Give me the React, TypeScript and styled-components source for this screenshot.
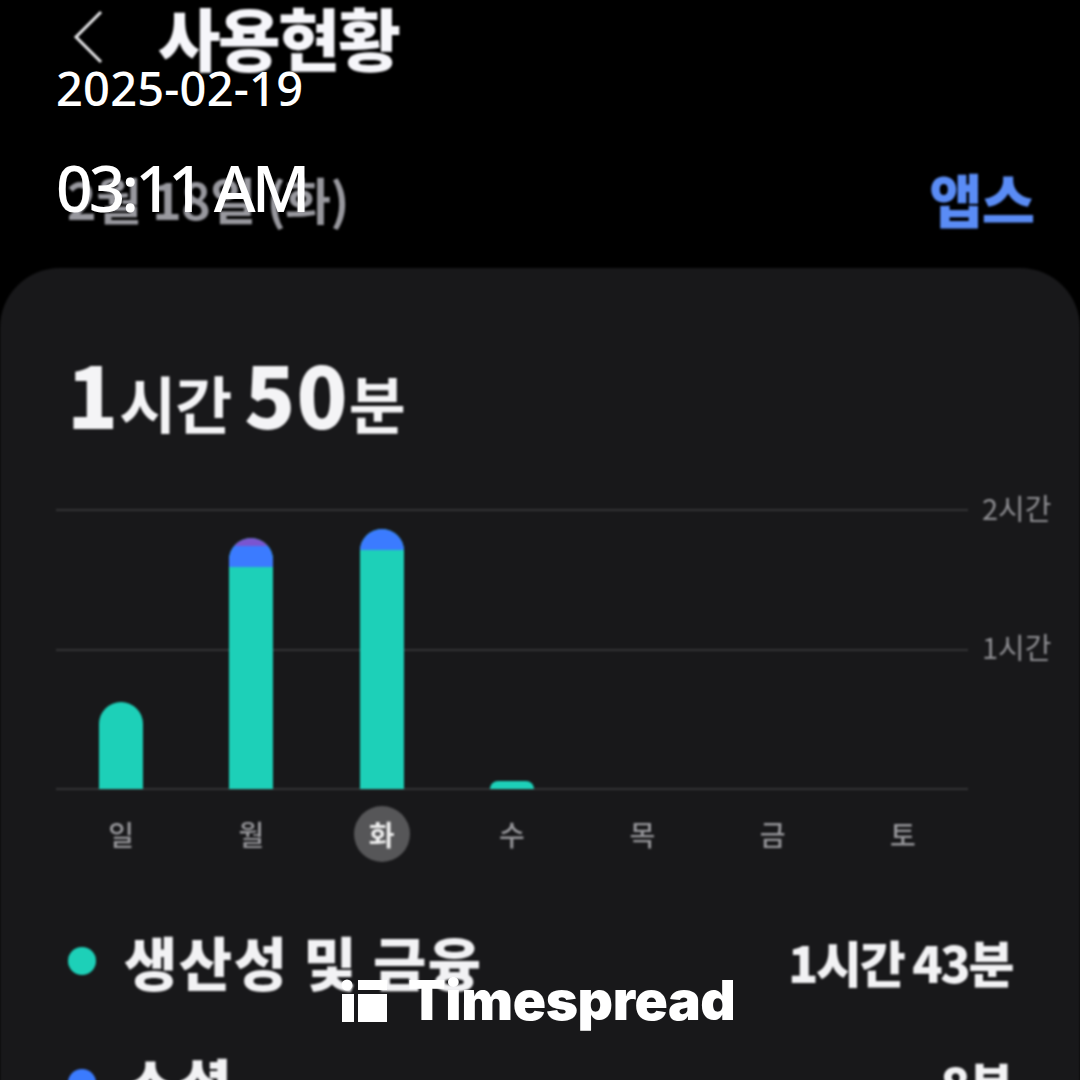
import React from "react";
import styled, { createGlobalStyle } from "styled-components";

const KR = `"Noto Sans CJK KR", "Noto Sans", sans-serif`;

const GlobalStyle = createGlobalStyle`
  html, body {
    margin: 0;
    padding: 0;
    background: #000;
  }
`;

const Frame = styled.div`
  position: relative;
  width: 1080px;
  height: 1080px;
  overflow: hidden;
  background: #000;
`;

const Screen = styled.div`
  height: 1080px;
  display: flex;
  flex-direction: column;
  font-family: ${KR};
  filter: blur(0.8px);
`;

const Header = styled.div`
  height: 268px;
  flex: none;
  display: flex;
  flex-direction: column;
`;

const TitleRow = styled.div`
  height: 74px;
  display: flex;
  align-items: center;
  padding-left: 72px;
  gap: 53px;
`;

const Title = styled.div`
  color: #f6f6fa;
  font-size: 68px;
  font-weight: 900;
  letter-spacing: -2.5px;
  line-height: 74px;
`;

const SubRow = styled.div`
  display: flex;
  justify-content: space-between;
  align-items: center;
  padding: 86px 46px 0 67px;
`;

const DateLabel = styled.div`
  color: #98989e;
  font-size: 50px;
  font-weight: 700;
  letter-spacing: -0.5px;
  line-height: 76px;
`;

const TabLabel = styled.div`
  color: #5a8cf5;
  font-size: 58px;
  font-weight: 900;
  letter-spacing: -1px;
  line-height: 76px;
`;

const Card = styled.div`
  flex: 1;
  background: #18181a;
  border-radius: 60px 60px 0 0;
  padding: 83px 0 0 56px;
`;

const Total = styled.div`
  color: #f4f4f6;
  font-weight: 700;
  font-size: 62px;
  line-height: 84px;
  height: 84px;
  margin-left: 11px;
  letter-spacing: -1px;
`;

const TotalNum = styled.span`
  font-size: 84px;
  font-weight: 900;
  letter-spacing: 1px;
`;

const Chart = styled.div`
  margin-top: 74px;
  display: grid;
  grid-template-columns: 912px 1fr;
  grid-template-rows: 281px;
`;

const Lines = styled.div`
  grid-area: 1 / 1;
  display: flex;
  flex-direction: column;
  justify-content: space-between;
`;

const Line = styled.div`
  height: 2px;
  background: #343436;
`;

const Bars = styled.div`
  grid-area: 1 / 1;
  display: grid;
  grid-template-columns: repeat(7, 1fr);
  align-items: end;
  justify-items: center;
  padding-bottom: 1px;
`;

const Bar = styled.div<{ $height: number }>`
  width: 44px;
  height: ${(p) => p.$height}px;
  border-radius: 22px 22px 0 0;
  overflow: hidden;
  background: #1dd0b8;
  display: flex;
  flex-direction: column;
`;

const Segment = styled.div<{ $color: string; $size: number }>`
  flex: none;
  height: ${(p) => p.$size}px;
  background: ${(p) => p.$color};
`;

const Scale = styled.div`
  grid-area: 1 / 2;
  display: flex;
  flex-direction: column;
  padding-left: 14px;
  margin-top: -22px;
`;

const ScaleLabel = styled.div`
  color: #8e8e92;
  font-size: 29px;
  line-height: 40px;
  height: 139px;
`;

const Days = styled.div`
  width: 912px;
  display: grid;
  grid-template-columns: repeat(7, 1fr);
  justify-items: center;
  margin-top: 16px;
`;

const Day = styled.div<{ $active?: boolean }>`
  width: 56px;
  height: 56px;
  border-radius: 50%;
  display: flex;
  align-items: center;
  justify-content: center;
  font-size: 28px;
  color: ${(p) => (p.$active ? "#eeeeee" : "#97979b")};
  background: ${(p) => (p.$active ? "#565658" : "transparent")};
  font-weight: ${(p) => (p.$active ? 700 : 500)};
`;

const Legend = styled.div`
  margin-top: 63px;
  display: flex;
  flex-direction: column;
  gap: 50px;
  padding: 0 68px 0 12px;
`;

const LegendRow = styled.div`
  display: flex;
  align-items: center;
  height: 72px;
`;

const Dot = styled.span<{ $color: string }>`
  width: 28px;
  height: 28px;
  border-radius: 50%;
  background: ${(p) => p.$color};
  flex: none;
  margin-right: 28px;
`;

const LegendName = styled.div`
  flex: 1;
  color: #f2f2f4;
  font-size: 58px;
  font-weight: 900;
  letter-spacing: 1.5px;
  line-height: 72px;
`;

const LegendValue = styled.div`
  color: #f2f2f4;
  font-size: 50px;
  font-weight: 900;
  letter-spacing: -2.4px;
  line-height: 72px;
`;

const Stamp = styled.div`
  position: absolute;
  left: 56px;
  top: 56px;
  display: flex;
  flex-direction: column;
  color: #fff;
  font-family: "Noto Sans", sans-serif;
  font-weight: 500;
`;

const StampDate = styled.div`
  font-size: 47px;
  line-height: 64px;
  letter-spacing: 0.2px;
`;

const StampTime = styled.div`
  font-size: 64px;
  line-height: 88px;
  margin-top: 24px;
  letter-spacing: -3.8px;
`;

const Watermark = styled.div`
  position: absolute;
  left: 341px;
  top: 968px;
  display: flex;
  align-items: center;
  gap: 21px;
  color: #fff;
  font-family: Inter, sans-serif;
  font-weight: 900;
  font-size: 55px;
  line-height: 64px;
  letter-spacing: -0.4px;
`;

const days = ["일", "월", "화", "수", "목", "금", "토"];

const App = (): JSX.Element => {
  return (
    <Frame>
      <GlobalStyle />
      <Screen>
        <Header>
          <TitleRow>
            <svg width="33" height="56" viewBox="0 0 33 56" fill="none">
              <path d="M29 3 L4 28 L29 53" stroke="#e8e8ea" strokeWidth="3" />
            </svg>
            <Title>사용현황</Title>
          </TitleRow>
          <SubRow>
            <DateLabel>2월 18일 (화)</DateLabel>
            <TabLabel>앱스</TabLabel>
          </SubRow>
        </Header>
        <Card>
          <Total>
            <TotalNum>1</TotalNum>시간 <TotalNum>50</TotalNum>분
          </Total>
          <Chart>
            <Lines>
              <Line />
              <Line />
              <Line />
            </Lines>
            <Bars>
              <Bar $height={87} />
              <Bar $height={251}>
                <Segment $color="#7a55d0" $size={8} />
                <Segment $color="#3b7bff" $size={21} />
              </Bar>
              <Bar $height={260}>
                <Segment $color="#3b7bff" $size={21} />
              </Bar>
              <Bar $height={8} />
              <div />
              <div />
              <div />
            </Bars>
            <Scale>
              <ScaleLabel>2시간</ScaleLabel>
              <ScaleLabel>1시간</ScaleLabel>
            </Scale>
          </Chart>
          <Days>
            {days.map((d) => (
              <Day key={d} $active={d === "화"}>
                {d}
              </Day>
            ))}
          </Days>
          <Legend>
            <LegendRow>
              <Dot $color="#1dd0b8" />
              <LegendName>생산성 및 금융</LegendName>
              <LegendValue>1시간 43분</LegendValue>
            </LegendRow>
            <LegendRow>
              <Dot $color="#3b7bff" />
              <LegendName>소셜</LegendName>
              <LegendValue>8분</LegendValue>
            </LegendRow>
          </Legend>
        </Card>
      </Screen>
      <Stamp>
        <StampDate>2025-02-19</StampDate>
        <StampTime>03:11 AM</StampTime>
      </Stamp>
      <Watermark>
        <svg width="46" height="44" viewBox="0 0 46 44" fill="#fff">
          <circle cx="6" cy="7" r="5.5" />
          <rect x="1" y="16" width="12" height="28" />
          <rect x="17" y="16" width="29" height="28" />
          <rect x="17" y="2" width="29" height="10" />
        </svg>
        Timespread
      </Watermark>
    </Frame>
  );
};

export default App;
